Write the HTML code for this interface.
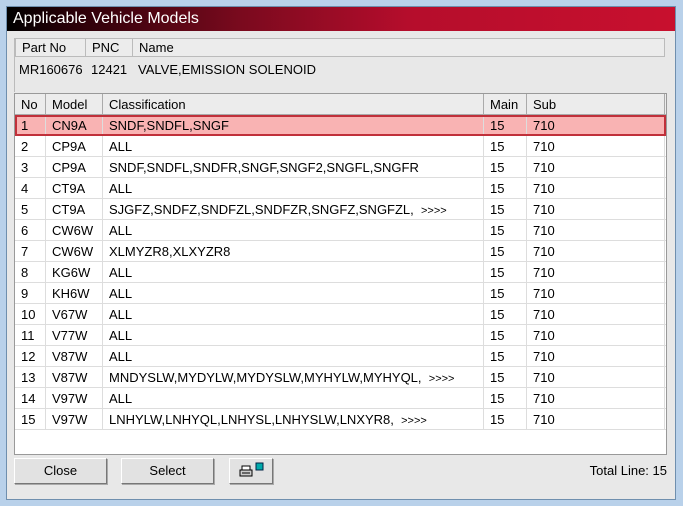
<!DOCTYPE html><html><head><style>
*{margin:0;padding:0;box-sizing:border-box}
body{width:683px;height:506px;overflow:hidden;background:#b9d1ea;font-family:"Liberation Sans",sans-serif;font-size:13px;color:#000;position:relative}
.win{position:absolute;left:6px;top:6px;width:670px;height:494px;background:#e8e8e8;border:1px solid #6f8fae}
.title{position:absolute;left:7px;top:7px;width:668px;height:24px;background:linear-gradient(90deg,#000 0%,#2a0008 10%,#7a0a1e 35%,#b50d2c 60%,#c8102e 100%);color:#fff;font-size:16px;line-height:24px;padding-left:6px}
.info{position:absolute;left:14px;top:38px;width:651px;height:54px;border-left:1px solid #bbb}
.ih{height:19px;background:#ececec;border:1px solid #bbb;display:flex}
.ih div{border-right:1px solid #bbb;padding-left:6px;line-height:18px}
.iv{line-height:26px;padding-left:4px;display:flex}
.grid{position:absolute;left:14px;top:93px;width:653px;height:362px;background:#fff;border:1px solid #999}
.row{display:flex;height:21px;border-bottom:1px solid #ddd;line-height:22px}
.row div{border-right:1px solid #ddd;padding-left:6px;overflow:hidden;white-space:nowrap}
.hd{background:#ececec;border-bottom:1px solid #aaa}
.hd div{border-right:1px solid #aaa}
.c1{width:31px}.c2{width:57px}.c3{width:381px}.c4{width:43px}.c5{width:138px}
.sel{background:#f9b3b3;outline:2px solid #c0303a;outline-offset:-2px}
.btn{position:absolute;top:458px;height:26px;background:#e2e2e2;border:1px solid;border-color:#fff #777 #777 #fff;box-shadow:1px 1px 0 #aaa;text-align:center;line-height:24px;font-size:13px}
</style></head><body>
<div class="win"></div>
<div class="title">Applicable Vehicle Models</div>
<div class="info">
<div class="ih"><div style="width:70px">Part No</div><div style="width:47px">PNC</div><div style="flex:1;border:none">Name</div></div>
<div class="iv"><span style="width:72px">MR160676</span><span style="width:47px">12421</span><span>VALVE,EMISSION SOLENOID</span></div>
</div>
<div class="grid">
<div class="row hd"><div class="c1">No</div><div class="c2">Model</div><div class="c3">Classification</div><div class="c4">Main</div><div class="c5">Sub</div></div>
<div class="row sel"><div class="c1">1</div><div class="c2">CN9A</div><div class="c3">SNDF,SNDFL,SNGF</div><div class="c4">15</div><div class="c5">710</div></div>
<div class="row"><div class="c1">2</div><div class="c2">CP9A</div><div class="c3">ALL</div><div class="c4">15</div><div class="c5">710</div></div>
<div class="row"><div class="c1">3</div><div class="c2">CP9A</div><div class="c3">SNDF,SNDFL,SNDFR,SNGF,SNGF2,SNGFL,SNGFR</div><div class="c4">15</div><div class="c5">710</div></div>
<div class="row"><div class="c1">4</div><div class="c2">CT9A</div><div class="c3">ALL</div><div class="c4">15</div><div class="c5">710</div></div>
<div class="row"><div class="c1">5</div><div class="c2">CT9A</div><div class="c3">SJGFZ,SNDFZ,SNDFZL,SNDFZR,SNGFZ,SNGFZL, &nbsp;<span style="font-size:11px">&gt;&gt;&gt;&gt;</span></div><div class="c4">15</div><div class="c5">710</div></div>
<div class="row"><div class="c1">6</div><div class="c2">CW6W</div><div class="c3">ALL</div><div class="c4">15</div><div class="c5">710</div></div>
<div class="row"><div class="c1">7</div><div class="c2">CW6W</div><div class="c3">XLMYZR8,XLXYZR8</div><div class="c4">15</div><div class="c5">710</div></div>
<div class="row"><div class="c1">8</div><div class="c2">KG6W</div><div class="c3">ALL</div><div class="c4">15</div><div class="c5">710</div></div>
<div class="row"><div class="c1">9</div><div class="c2">KH6W</div><div class="c3">ALL</div><div class="c4">15</div><div class="c5">710</div></div>
<div class="row"><div class="c1">10</div><div class="c2">V67W</div><div class="c3">ALL</div><div class="c4">15</div><div class="c5">710</div></div>
<div class="row"><div class="c1">11</div><div class="c2">V77W</div><div class="c3">ALL</div><div class="c4">15</div><div class="c5">710</div></div>
<div class="row"><div class="c1">12</div><div class="c2">V87W</div><div class="c3">ALL</div><div class="c4">15</div><div class="c5">710</div></div>
<div class="row"><div class="c1">13</div><div class="c2">V87W</div><div class="c3">MNDYSLW,MYDYLW,MYDYSLW,MYHYLW,MYHYQL, &nbsp;<span style="font-size:11px">&gt;&gt;&gt;&gt;</span></div><div class="c4">15</div><div class="c5">710</div></div>
<div class="row"><div class="c1">14</div><div class="c2">V97W</div><div class="c3">ALL</div><div class="c4">15</div><div class="c5">710</div></div>
<div class="row"><div class="c1">15</div><div class="c2">V97W</div><div class="c3">LNHYLW,LNHYQL,LNHYSL,LNHYSLW,LNXYR8, &nbsp;<span style="font-size:11px">&gt;&gt;&gt;&gt;</span></div><div class="c4">15</div><div class="c5">710</div></div>
</div>
<div class="btn" style="left:14px;width:93px">Close</div>
<div class="btn" style="left:121px;width:93px">Select</div>
<div class="btn" style="left:229px;width:44px"><svg width="34" height="22" viewBox="0 0 34 22"><rect x="8" y="7" width="8" height="4" fill="#fff" stroke="#000"/><rect x="6" y="11" width="12" height="6" fill="#ccc" stroke="#000"/><line x1="8" y1="14" x2="16" y2="14" stroke="#000"/><rect x="22" y="4" width="7" height="7" fill="#0aa" stroke="#024"/></svg></div>
<div style="position:absolute;right:16px;top:463px;font-size:13px">Total Line: 15</div>
</body></html>
